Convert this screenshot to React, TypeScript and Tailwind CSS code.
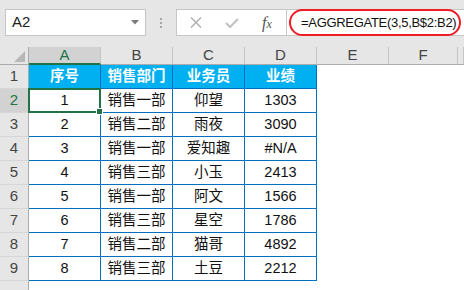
import React from "react";

const font = "font-['Liberation_Sans','Noto_Sans_CJK_SC',sans-serif]";

const cols = ["A", "B", "C", "D", "E", "F", ""];

const rows = [
  ["1", "销售一部", "仰望", "1303"],
  ["2", "销售二部", "雨夜", "3090"],
  ["3", "销售一部", "爱知趣", "#N/A"],
  ["4", "销售三部", "小玉", "2413"],
  ["5", "销售一部", "阿文", "1566"],
  ["6", "销售三部", "星空", "1786"],
  ["7", "销售二部", "猫哥", "4892"],
  ["8", "销售三部", "土豆", "2212"],
];

const RowHeader = ({ n, active }: { n?: number; active?: boolean }) => (
  <div
    className={`h-[24px] flex items-center justify-center border-r border-b border-r-[#ababab] border-b-[#d6d6d6] text-[15px] ${
      active ? "bg-[#d2d2d2] text-[#217346]" : "bg-[#e6e6e6] text-[#444]"
    }`}
  >
    {n}
  </div>
);

const Blank = () => <div className="h-[24px] bg-white" />;

export default function App() {
  return (
    <div className={`w-[464px] h-[290px] overflow-hidden bg-[#e6e6e6] ${font}`}>
      {/* formula bar */}
      <div className="h-[47px] flex items-start pt-[9px]">
        <div className="ml-[5px] w-[141px] h-[27px] bg-white border border-[#c6c6c6] flex items-center justify-between pl-[6px] pr-[6px]">
          <span className="text-[15px] text-[#222]">A2</span>
          <svg width="8" height="5" viewBox="0 0 8 5">
            <path d="M0 0 L8 0 L4 4.5 Z" fill="#7a7a7a" />
          </svg>
        </div>
        <div className="w-[30px] h-[27px] flex flex-col items-center justify-center gap-[2px]">
          <span className="w-[2px] h-[2px] bg-[#a6a6a6]" />
          <span className="w-[2px] h-[2px] bg-[#a6a6a6]" />
          <span className="w-[2px] h-[2px] bg-[#a6a6a6]" />
        </div>
        <div className="w-[111px] h-[27px] bg-white border border-[#c6c6c6] flex items-center">
          <svg className="ml-[13px]" width="12" height="11" viewBox="0 0 12 11">
            <path d="M1 0.5 L11 10.5 M11 0.5 L1 10.5" stroke="#b4b4b4" strokeWidth="1.6" />
          </svg>
          <svg className="ml-[23px]" width="14" height="10" viewBox="0 0 14 10">
            <path d="M1 5 L5 9 L13 1" stroke="#c2c2c2" strokeWidth="2.2" fill="none" />
          </svg>
          <span className="ml-[23px] font-['Liberation_Serif',serif] italic text-[#555] leading-none">
            <span className="text-[16px]">f</span>
            <span className="text-[12px]">x</span>
          </span>
        </div>
        <div className="flex-1 h-[27px] bg-white border-y border-[#c6c6c6] flex items-center">
          <div className="ml-[2px] mr-[3px] flex-1 h-[27px] rounded-full border-2 border-[#ee1c24] flex items-center pl-[10px]">
            <span className="text-[13px] tracking-[-0.3px] text-[#111]">=AGGREGATE(3,5,B$2:B2)</span>
          </div>
        </div>
      </div>

      {/* sheet */}
      <div className="grid grid-cols-[29px_72px_72px_72px_72px_72px_69px_1fr]">
        {/* column headers */}
        <div className="h-[18px] border-r border-b border-[#ababab] bg-[#e6e6e6] flex items-end justify-end pr-[3px] pb-[2px]">
          <svg width="11" height="11" viewBox="0 0 11 11">
            <path d="M11 0 L11 11 L0 11 Z" fill="#b8b8b8" />
          </svg>
        </div>
        {cols.map((c) => (
          <div
            key={c || "g"}
            className={`h-[18px] flex items-center justify-center border-r border-r-[#c4c4c4] text-[15px] ${
              c === "A"
                ? "bg-[#d2d2d2] text-[#217346] border-b-2 border-b-[#217346]"
                : "bg-[#e6e6e6] text-[#444] border-b border-b-[#ababab]"
            }`}
          >
            {c}
          </div>
        ))}

        {/* row 1: table header */}
        <RowHeader n={1} />
        {["序号", "销售部门", "业务员", "业绩"].map((h) => (
          <div
            key={h}
            className="h-[24px] bg-[#00b0f0] text-white font-bold text-[14.5px] flex items-center justify-center border-r border-b border-[#0070c0]"
          >
            {h}
          </div>
        ))}
        <Blank />
        <Blank />
        <Blank />

        {/* data rows */}
        {rows.map((r, i) => (
          <React.Fragment key={i}>
            <RowHeader n={i + 2} active={i === 0} />
            {r.map((v, j) => (
              <div
                key={j}
                className="relative h-[24px] bg-white text-[#111] text-[14.5px] flex items-center justify-center border-r border-b border-[#0070c0]"
              >
                {v}
                {i === 0 && j === 0 && (
                  <>
                    <div className="absolute -left-[1px] -top-[1px] -right-[1px] -bottom-[1px] border-2 border-[#217346] z-10" />
                    <div className="absolute -right-[3px] -bottom-[3px] w-[7px] h-[7px] bg-[#217346] border border-white z-20" />
                  </>
                )}
              </div>
            ))}
            <Blank />
            <Blank />
            <Blank />
          </React.Fragment>
        ))}

        {/* row 10, cut off by the window */}
        <RowHeader />
        {cols.map((c) => (
          <Blank key={c || "g"} />
        ))}
      </div>
    </div>
  );
}
